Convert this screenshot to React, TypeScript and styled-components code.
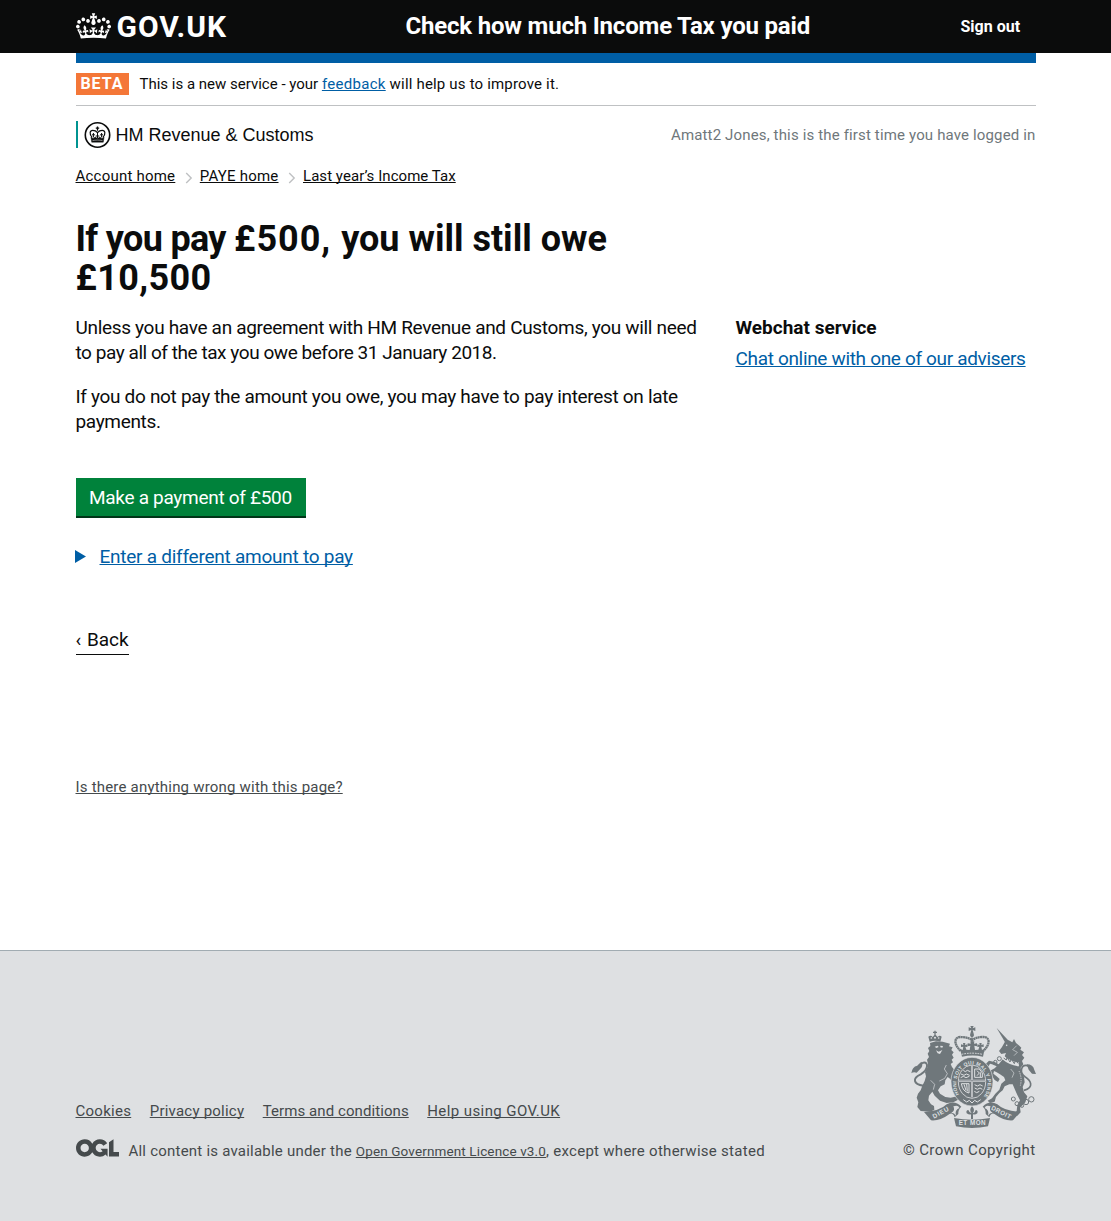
import React from 'react';
import styled, { createGlobalStyle } from 'styled-components';

const GlobalStyle = createGlobalStyle`
  * { box-sizing: border-box; }
  body {
    margin: 0;
    background: #fff;
    color: #0b0c0c;
    font-family: Roboto, "Liberation Sans", sans-serif;
    font-size: 19px;
  }
  a { text-decoration-skip-ink: none; }
`;

const Container = styled.div`
  width: 960px;
  margin: 0 auto;
`;

const Header = styled.header`
  height: 53px;
  background: #0b0c0c;
  color: #fff;
`;

const HeaderInner = styled(Container)`
  display: grid;
  grid-template-columns: 330px 1fr 75px;
  height: 53px;
`;

const Brand = styled.a`
  display: flex;
  align-items: flex-start;
  gap: 6px;
  padding-top: 13px;
  color: #fff;
  font-size: 30px;
  font-weight: 700;
  line-height: 28px;
  letter-spacing: 0.95px;
`;

const ServiceName = styled.div`
  padding-top: 11px;
  font-size: 24px;
  font-weight: 700;
  line-height: 30px;
  letter-spacing: -0.19px;
`;

const SignOut = styled.a`
  padding-top: 17px;
  font-size: 16px;
  font-weight: 700;
  line-height: 20px;
`;

const BlueBar = styled(Container)`
  height: 10px;
  background: #005ea5;
`;

const PhaseBanner = styled(Container)`
  display: flex;
  align-items: flex-start;
  gap: 11px;
  height: 43px;
  padding-top: 10px;
  border-bottom: 1px solid #bfc1c3;
`;

const PhaseTag = styled.strong`
  width: 53px;
  height: 22px;
  padding-left: 5px;
  background: #f47738;
  color: #fff;
  font-size: 16px;
  line-height: 22px;
  letter-spacing: 0.9px;
`;

const Text = styled.span<{ $spacing?: number; $size?: number; $line?: number }>`
  display: block;
  font-size: ${(p) => p.$size ?? 15}px;
  line-height: ${(p) => p.$line ?? 20}px;
  letter-spacing: ${(p) => p.$spacing ?? 0}px;
  white-space: pre;
`;

const Tracked = styled.span<{ $spacing: number }>`
  letter-spacing: ${(p) => p.$spacing}px;
`;

const Link = styled.a<{ $color?: string; $spacing?: number; $size?: number }>`
  color: ${(p) => p.$color ?? '#005ea5'};
  font-size: ${(p) => (p.$size ? `${p.$size}px` : 'inherit')};
  letter-spacing: ${(p) => (p.$spacing === undefined ? 'inherit' : `${p.$spacing}px`)};
  text-decoration: underline;
  text-decoration-thickness: 1px;
  text-underline-offset: 1px;
  white-space: pre;
`;

const AccountRow = styled(Container)`
  display: flex;
  justify-content: space-between;
  padding-top: 15px;
`;

const Organisation = styled.div`
  display: flex;
  align-items: center;
  gap: 5px;
  height: 27px;
  padding-left: 6px;
  border-left: 2px solid #009390;
  font-family: "Liberation Sans", Arial, sans-serif;
  font-size: 18px;
  line-height: 27px;
`;

const OrganisationName = styled.span`
  padding-top: 2px;
`;

const LoginNote = styled.div`
  padding-top: 4px;
  color: #6f777b;
`;

const Breadcrumbs = styled(Container)`
  display: flex;
  align-items: center;
  height: 20px;
  margin-top: 18px;
  font-size: 15px;
  line-height: 20px;
`;

const Separator = styled.svg`
  margin: 3px 7px 0 9.5px;
`;

const Columns = styled(Container)`
  display: grid;
  grid-template-columns: 660px 1fr;
  height: 764px;
  padding-top: 34px;
`;

const Main = styled.main`
  display: flex;
  flex-direction: column;
  align-items: flex-start;
`;

const Heading = styled.h1`
  margin: 0;
  font-weight: 700;
`;

const Paragraph = styled.p`
  margin: 0 0 19px;
`;

const Body = styled.div`
  margin-top: 17px;
`;

const PayButton = styled.button`
  width: 230px;
  height: 38px;
  margin: 25px 0 0;
  padding: 2px 0 0 13.5px;
  border: 0;
  background: #00823b;
  box-shadow: 0 2px 0 #003618;
  color: #fff;
  font-family: inherit;
  font-size: 19px;
  line-height: 36px;
  letter-spacing: -0.3px;
  text-align: left;
  white-space: nowrap;
`;

const Disclosure = styled.div`
  display: flex;
  align-items: center;
  height: 25px;
  margin-top: 28px;
`;

const Marker = styled.svg`
  flex: none;
  margin: 0 14px 0 -1px;
`;

const Back = styled.a`
  display: flex;
  gap: 6px;
  width: 53px;
  height: 27px;
  margin-top: 59px;
  border-bottom: 1px solid #0b0c0c;
  font-size: 19px;
  line-height: 24px;
  letter-spacing: -0.1px;
`;

const Report = styled.div`
  margin-top: 122px;
`;

const Sidebar = styled.aside`
  padding-top: 95px;
`;

const SidebarTitle = styled.h2`
  margin: 0 0 6px;
  font-size: 19px;
  font-weight: 700;
  line-height: 25px;
`;

const Footer = styled.footer`
  height: 271px;
  border-top: 1px solid #a1acb2;
  background: #dee0e2;
  color: #454a4c;
`;

const FooterInner = styled(Container)`
  display: flex;
  justify-content: space-between;
  padding-top: 75px;
`;

const FooterMeta = styled.div`
  padding-top: 75px;
`;

const FooterLinks = styled.div`
  display: flex;
  gap: 18.5px;
  font-size: 15px;
  line-height: 20px;
`;

const Licence = styled.div`
  display: flex;
  gap: 10px;
  margin-top: 18px;
`;

const LicenceText = styled.div`
  padding-top: 2px;
`;

const Copyright = styled.div`
  display: flex;
  flex-direction: column;
  align-items: flex-end;
  gap: 12px;
`;

const CROWN =
  'M25 30.2c3.5 1.5 7.7-.2 9.1-3.7 1.5-3.6-.2-7.8-3.9-9.2-3.6-1.4-7.6.3-9.1 3.9-1.4 3.5.3 7.5 3.9 9zM9 39.5c3.6 1.5 7.8-.2 9.2-3.7 1.5-3.6-.2-7.8-3.9-9.1-3.6-1.5-7.6.2-9.1 3.8-1.4 3.5.3 7.5 3.8 9zM4.4 57.2c3.5 1.5 7.7-.2 9.1-3.8 1.5-3.6-.2-7.7-3.9-9.1-3.5-1.5-7.6.3-9.1 3.8-1.4 3.5.3 7.6 3.9 9.1zm38.3-21.4c3.5 1.5 7.7-.2 9.1-3.8 1.5-3.6-.2-7.7-3.9-9.1-3.6-1.5-7.6.3-9.1 3.8-1.3 3.6.4 7.7 3.9 9.1zm64.4-5.6c-3.6 1.5-7.8-.2-9.1-3.7-1.5-3.6.2-7.8 3.8-9.2 3.6-1.4 7.7.3 9.2 3.9 1.3 3.5-.4 7.5-3.9 9zm15.9 9.3c-3.6 1.5-7.7-.2-9.1-3.7-1.5-3.6.2-7.8 3.7-9.1 3.6-1.5 7.7.2 9.2 3.8 1.5 3.5-.3 7.5-3.8 9zm4.7 17.7c-3.6 1.5-7.8-.2-9.2-3.8-1.5-3.6.2-7.7 3.9-9.1 3.6-1.5 7.7.3 9.2 3.8 1.3 3.5-.4 7.6-3.9 9.1zM89.3 35.8c-3.6 1.5-7.8-.2-9.2-3.8-1.4-3.6.2-7.7 3.9-9.1 3.6-1.5 7.7.3 9.2 3.8 1.4 3.6-.3 7.7-3.9 9.1zM69.7 17.7l8.9 4.7V9.3l-8.9 2.8c-.2-.3-.5-.6-.9-.9L72.4 0H59.6l3.5 11.2c-.3.3-.6.5-.9.9l-8.8-2.8v13.1l8.8-4.7c.3.3.6.7.9.9l-5 15.4v.1c-.2.8-.4 1.6-.4 2.4 0 4.1 3.1 7.5 7 8.1h.2c.3 0 .7.1 1 .1.4 0 .7 0 1-.1h.2c4-.6 7.1-4.1 7.1-8.1 0-.8-.1-1.7-.4-2.4V34l-5.1-15.4c.4-.2.7-.6 1-.9zM66 92.8c16.9 0 32.8 1.1 47.1 3.2 4-16.9 8.9-26.7 14-33.5l-9.6-3.4c1 4.9 1.1 7.2 0 10.2-1.5-1.4-3-4.3-4.2-8.7L108.6 76c2.8-2 5-3.2 7.5-3.3-4.4 9.4-10 11.9-13.6 11.2-4.3-.8-6.3-4.6-5.6-7.9 1-4.7 5.7-5.9 8-.5 4.3-8.7-3-11.4-7.6-8.8 7.1-7.2 7.9-13.5 2.1-21.1-8 6.1-8.1 12.3-4.5 20.8-4.7-5.4-12.1-2.5-9.5 6.2 3.4-5.2 7.9-2 7.2 3.1-.6 4.3-6.4 7.8-13.5 7.2-10.3-.9-10.9-8-11.2-13.8 2.5-.5 7.1 1.8 11 7.3L80.2 60c-4.1 4.4-8 5.3-12.3 5.4 1.4-4.4 8-11.6 8-11.6H55.5s6.4 7.2 7.9 11.6c-4.2-.1-8-1-12.3-5.4l1.4 16.4c3.9-5.5 8.5-7.7 10.9-7.3-.3 5.8-.9 12.8-11.1 13.8-7.2.6-12.9-2.9-13.5-7.2-.7-5 3.8-8.3 7.1-3.1 2.7-8.7-4.6-11.6-9.4-6.2 3.7-8.5 3.6-14.7-4.6-20.8-5.8 7.6-5 13.9 2.2 21.1-4.7-2.6-11.9.1-7.7 8.8 2.3-5.5 7.1-4.2 8.1.5.7 3.3-1.3 7.1-5.7 7.9-3.5.7-9-1.8-13.5-11.2 2.5.1 4.7 1.3 7.5 3.3l-4.7-15.4c-1.2 4.4-2.7 7.2-4.3 8.7-1.1-3-.9-5.3 0-10.2l-9.5 3.4c5 6.9 9.9 16.7 14 33.5 14.8-2.1 30.8-3.2 47.7-3.2z';

const OGL =
  'M421.5 142.8V.1l-50.7 32.3v161.1h112.4v-50.7zm-122.3-9.6A47.12 47.12 0 0 1 221 97.8c0-26 21.1-47.1 47.1-47.1 16.7 0 31.4 8.7 39.7 21.8l42.7-27.2A97.63 97.63 0 0 0 268.1 0c-36.5 0-68.3 20.1-85.1 49.7A98 98 0 0 0 97.8 0C43.9 0 0 43.9 0 97.8s43.9 97.8 97.8 97.8c36.5 0 68.3-20.1 85.1-49.7a97.76 97.76 0 0 0 149.6 25.4l19.4 22.2h3v-87.8h-80l24.3 27.5zM97.8 145c-26 0-47.1-21.1-47.1-47.1s21.1-47.1 47.1-47.1 47.1 21.1 47.1 47.1S123.8 145 97.8 145';

function OrganisationCrest() {
  return (
    <svg width="27" height="27" viewBox="0 0 27 27" fill="none" stroke="#0b0c0c">
      <circle cx="13.5" cy="14" r="12.2" strokeWidth="1.6" />
      <path d="M8.1 16.4C4.9 12.6 5.9 9.4 8.7 9.4c2 0 3.6.8 4.8 2.2 1.2-1.4 2.8-2.2 4.8-2.2 2.8 0 3.8 3.2.6 7" strokeWidth="1.2" />
      <path d="M13.5 11.4v6M9.4 12v4.4M7.9 13.8h3M17.6 12v4.4M16.1 13.8h3M11.7 15h3.6" strokeWidth="1" />
      <path d="M13.5 5.4v4.4M11.8 7.2h3.4" strokeWidth="1.3" />
      <path d="M6.9 16l2.2 1.5 2.1-1.5 2.3 1.5 2.3-1.5 2.1 1.5 2.2-1.5-.8 5.2H7.7z" fill="#0b0c0c" strokeWidth=".4" />
      <path d="M8.5 19.6c3-.7 7-.7 10 0" stroke="#fff" strokeWidth=".5" />
    </svg>
  );
}

function Chevron() {
  return (
    <Separator width="8" height="12" viewBox="0 0 8 12" fill="none" stroke="#bfc1c3" strokeWidth="1.4">
      <path d="M1.2 1l5 5-5 5" />
    </Separator>
  );
}

function RoyalArms() {
  const ink = '#6f777b';
  const paper = '#dee0e2';
  return (
    <svg width="125" height="102" viewBox="33 33 375 306" fill={ink}>
      {/* lion */}
      <path d="M89 80l-4-15q8-6 13 1l7-8 8 8q6-7 12-1l-4 15q-16-5-32 0z" />
      <path d="M99 52h12M105 47v12" stroke={ink} strokeWidth="4" />
      <g fill={paper}>
        <circle cx="94" cy="69" r="2.5" /><circle cx="105" cy="68" r="3" /><circle cx="116" cy="69" r="2.5" />
      </g>
      <path d="M90 84L108 79 128 80 150 86 147 94 158 97 154 105 161 112 156 119 161 128 155 134 159 142 152 147 156 156 164 166 168 180 166 196 160 206 151 192 143 186 136 196 134 208 122 214 114 226 120 236 136 246 152 248 172 244 174 254 160 262 140 264 120 257 104 242 97 230 87 242 85 256 93 268 102 273 103 284 91 290 62 288 52 276 55 262 50 248 54 236 62 226 67 212 74 198 78 184 75 172 82 158 84 146 81 134 87 126 83 116 88 108 84 99 91 93z" />
      <path d="M104 95l9-3 3 4-7 3zM121 92l8 1-2 5-6-1zM108 106l8 4 11-5-7 12-7-2z" fill={paper} />
      <path d="M139 150l-6 12 9 14-8 14-16 8M92 196l12 12-4 16" fill="none" stroke={paper} strokeWidth="2" />
      <path d="M70 212C40 208 36 190 62 178 86 164 86 140 70 143 60 146 54 154 48 164" fill="none" stroke={ink} strokeWidth="6" />
      <path d="M34 175q2-20 18-23l12-12q6 8 0 18l-14 15q-10-4-16 2z" />
      {/* unicorn */}
      <path d="M290 39l36 38-10 6z" />
      <path d="M316 78L326 76 337 82 342 72 348 84 358 92 364 98 361 104 372 112 366 120 373 128 366 138 370 148 362 158 364 170 372 186 374 202 368 216 372 232 382 244 376 262 360 278 362 292 352 302 338 300 350 288 352 270 360 256 352 240 344 222 338 208 328 208 314 214 308 226 298 234 288 246 284 260 270 264 263 257 276 250 286 236 298 224 304 206 316 196 312 186 300 178 290 172 282 168 280 176 290 184 299 192 294 201 284 195 272 178 269 168 284 160 290 154 276 148 270 146 265 155 257 147 267 137 284 141 296 148 304 138 312 128 318 114 304 117 297 108 306 96z" />
      <path d="M312 122q18 17 44 20l1 12q-29-3-51-22z" fill={paper} />
      <path d="M311 129l8 6 2-8 9 14 4-9 9 14 3-9 9 8" fill="none" stroke={ink} strokeWidth="3" />
      <circle cx="320" cy="91" r="2.4" fill={paper} />
      <path d="M350 92l-12 12 14 8-10 10M332 162l10 12-6 14" fill="none" stroke={paper} strokeWidth="1.8" />
      <path d="M372 226C404 218 392 196 376 186 356 172 364 148 382 152 392 155 398 166 402 174" fill="none" stroke={ink} strokeWidth="5" />
      <path d="M380 148q20 0 23 17l5 12-12-1-10-12z" />
      <g fill="none" stroke={ink} strokeWidth="3">
        <circle cx="340" cy="252" r="6" /><circle cx="351" cy="266" r="6" />
        <circle cx="378" cy="261" r="8" /><circle cx="394" cy="253" r="8" /><circle cx="366" cy="272" r="5" />
        <circle cx="298" cy="131" r="6" /><circle cx="286" cy="141" r="5" />
      </g>
      <path d="M357 168q10 20 4 44" fill="none" stroke={paper} strokeWidth="2.5" strokeDasharray="4 3" />
      {/* crown */}
      <path d="M211 33h10l-3 7 8-3v11l-8-3 3 11h-10l3-11-8 3V37l8 3z" />
      <circle cx="216" cy="60" r="6" />
      <path d="M182 108C157 83 165 65 183 66q22 0 33 10 11-10 33-10c18-1 26 17 1 42" fill="none" stroke={ink} strokeWidth="7" strokeDasharray="6 1" />
      <path d="M216 62v34" stroke={ink} strokeWidth="5" strokeDasharray="5 1" />
      <path d="M180 101l8 4 2-10-7 1v-8l7 2-1-6h7l-1 6 7-2v8l-6-1 3 9 10 1 2-13-8 2v-9l9 1-1-7h12l-1 7 9-1v9l-8-2 2 13 10-1 3-9-6 1v-8l7 2-1-6h7l-1 6 7-2v8l-7-1 2 10 8-4-5 24q-31-7-63 0z" />
      <path d="M185 118q31-7 62 0" fill="none" stroke={paper} strokeWidth="3" strokeDasharray="5 3" />
      {/* garter and shield */}
      <ellipse cx="216" cy="200" rx="63" ry="73" stroke={paper} strokeWidth="2" />
      <ellipse cx="216" cy="200" rx="41" ry="50" fill="none" stroke={paper} strokeWidth="2.5" />
      <defs>
        <path id="garter" d="M179 242A47 58 0 1 1 253 242" />
      </defs>
      <text fill={paper} fontFamily="Liberation Sans" fontWeight="700" fontSize="15">
        <textPath href="#garter" textLength="240" startOffset="4">HONI SOIT QUI MAL Y PENSE</textPath>
      </text>
      <path d="M177 197h78M216 150v97" stroke={paper} strokeWidth="6" />
      <path d="M177 197h78M216 150v97" stroke={ink} strokeWidth="2" />
      <g fill="none" stroke={paper} strokeWidth="3">
        <path d="M190 166l6 4 6-4 9 4M183 177l9 4 7-4 10 4M182 188l8-4 8 4 10-4" />
        <path d="M224 162h14l9 12v13h-23zM231 167l7 7-7 8M241 172v14" />
        <path d="M184 206h23v28q-19-4-23-28zM192 208l6 18M200 207l2 22" />
        <path d="M224 209l8 4 8-4 8 4M224 219l8 4 8-4 7 4M223 229l7 4 8-4" />
      </g>
      <path d="M190 254l10 7 8-5 8 8 8-8 8 5 10-7" fill="none" stroke={paper} strokeWidth="3" />
      {/* motto ribbon */}
      <path d="M72 291Q120 288 140 268q24-14 44 7-10 8-9 22l-11 10q-7-19-21-6-22 17-50 15z" />
      <path d="M360 291Q312 288 292 268q-24-14-44 7 10 8 9 22l11 10q7-19 21-6 22 17 50 15z" />
      <path d="M162 309q54 10 108 0l-6 25q-48 10-96 0z" />
      <path d="M160 274q15-6 18 5-15 6-10 23-5-9-14-9 13-6 6-19zM272 274q-15-6-18 5 15 6 10 23 5-9 14-9-13-6-6-19z" fill={paper} />
      <g fill={paper} fontFamily="Liberation Sans" fontWeight="700" fontSize="19">
        <text x="102" y="311" textLength="52" transform="rotate(-29 102 311)">DIEU</text>
        <text x="176" y="331" textLength="81">ET MON</text>
        <text x="272" y="283" textLength="64" transform="rotate(27 272 283)">DROIT</text>
      </g>
      <path d="M216 274q-10 10-1 21-6 0-10-10-8 1-5 10 8 5 13 3v14h6v-14q7 2 13-3 3-9-5-10-3 10-9 10 9-11-2-21z" />
    </svg>
  );
}

export default function App() {
  return (
    <>
      <GlobalStyle />
      <Header>
        <HeaderInner>
          <Brand>
            <svg width="35" height="26" viewBox="0 0 132 97" fill="#fff">
              <path d={CROWN} />
            </svg>
            GOV.UK
          </Brand>
          <ServiceName>Check how much Income Tax you paid</ServiceName>
          <SignOut>Sign out</SignOut>
        </HeaderInner>
      </Header>
      <BlueBar />
      <PhaseBanner>
        <PhaseTag>BETA</PhaseTag>
        <Text $line={22}>
          This is a new service - your <Link $spacing={0.3}>feedback</Link>
          <Tracked $spacing={0.18}> will help us to improve it.</Tracked>
        </Text>
      </PhaseBanner>
      <AccountRow>
        <Organisation>
          <OrganisationCrest />
          <OrganisationName>HM Revenue &amp; Customs</OrganisationName>
        </Organisation>
        <LoginNote>
          <Text $spacing={0.15}>Amatt2 Jones, this is the first time you have logged in</Text>
        </LoginNote>
      </AccountRow>
      <Breadcrumbs>
        <Link $color="#0b0c0c" $spacing={0.22}>Account home</Link>
        <Chevron />
        <Link $color="#0b0c0c" $spacing={0.22}>PAYE home</Link>
        <Chevron />
        <Link $color="#0b0c0c" $spacing={0.05}>Last year’s Income Tax</Link>
      </Breadcrumbs>
      <Columns>
        <Main>
          <Heading>
            <Text $size={36} $line={39}>
              <Tracked $spacing={-0.68}>If you pay </Tracked>
              <Tracked $spacing={1}>£500, </Tracked>
              <Tracked $spacing={0}>you will still owe</Tracked>
            </Text>
            <Text $size={36} $line={39} $spacing={0.35}>£10,500</Text>
          </Heading>
          <Body>
            <Paragraph>
              <Text $size={19} $line={25} $spacing={-0.32}>
                Unless you have an agreement with HM Revenue and Customs, you will need
              </Text>
              <Text $size={19} $line={25} $spacing={-0.45}>to pay all of the tax you owe before 31 January 2018.</Text>
            </Paragraph>
            <Paragraph>
              <Text $size={19} $line={25} $spacing={-0.32}>
                If you do not pay the amount you owe, you may have to pay interest on late
              </Text>
              <Text $size={19} $line={25} $spacing={-0.34}>payments.</Text>
            </Paragraph>
          </Body>
          <PayButton>Make a payment of £500</PayButton>
          <Disclosure>
            <Marker width="11" height="13" viewBox="0 0 11 13" fill="#005ea5">
              <path d="M0 0l11 6.5L0 13z" />
            </Marker>
            <Text $size={19} $line={25} $spacing={-0.25}>
              <Link>Enter a different amount to pay</Link>
            </Text>
          </Disclosure>
          <Back>
            <span>‹</span>
            <span>Back</span>
          </Back>
          <Report>
            <Text $spacing={0.2}>
              <Link $color="#454a4c">Is there anything wrong with this page?</Link>
            </Text>
          </Report>
        </Main>
        <Sidebar>
          <SidebarTitle>Webchat service</SidebarTitle>
          <Text $size={19} $line={25} $spacing={-0.33}>
            <Link>Chat online with one of our advisers</Link>
          </Text>
        </Sidebar>
      </Columns>
      <Footer>
        <FooterInner>
          <FooterMeta>
            <FooterLinks>
              <Link $color="#454a4c" $spacing={0.27}>Cookies</Link>
              <Link $color="#454a4c" $spacing={0.22}>Privacy policy</Link>
              <Link $color="#454a4c" $spacing={0.08}>Terms and conditions</Link>
              <Link $color="#454a4c" $spacing={0.41}>Help using GOV.UK</Link>
            </FooterLinks>
            <Licence>
              <svg width="43" height="18" viewBox="0 0 483.2 195.7" fill="#454a4c">
                <path d={OGL} />
              </svg>
              <LicenceText>
                <Text $spacing={0.22}>
                  All content is available under the{' '}
                  <Link $color="#454a4c" $size={13.5} $spacing={0.13}>Open Government Licence v3.0</Link>
                  <Tracked $spacing={0.28}>, except where otherwise stated</Tracked>
                </Text>
              </LicenceText>
            </Licence>
          </FooterMeta>
          <Copyright>
            <RoyalArms />
            <Text $spacing={0.38}>© Crown Copyright</Text>
          </Copyright>
        </FooterInner>
      </Footer>
    </>
  );
}
